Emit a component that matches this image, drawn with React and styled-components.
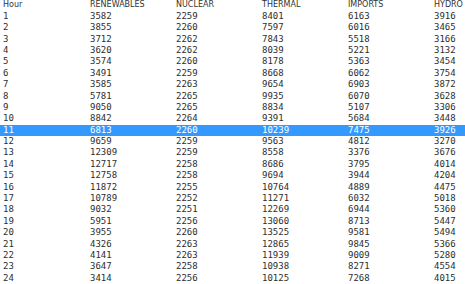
import React from 'react';
import styled, { createGlobalStyle } from 'styled-components';

const GlobalStyle = createGlobalStyle`
  html, body {
    margin: 0;
    padding: 0;
    background: #fff;
    overflow: hidden;
  }
`;

const Table = styled.div`
  width: 465px;
  height: 284px;
  overflow: hidden;
  background: #fff;
`;

const Row = styled.div`
  display: grid;
  grid-template-columns: 87px 86px 86px 86px 86px 86px;
  height: ${p => (p.$head ? '10.6px' : '11.4px')};
  align-items: center;
  padding-left: 3px;
  width: 520px;
  background: ${p => (p.$selected ? '#3399ff' : 'transparent')};
  color: ${p => (p.$selected ? '#fff' : '#2e2e2e')};
`;

const HeadCell = styled.div`
  font-family: "DejaVu Sans", Verdana, sans-serif;
  font-size: 8px;
  line-height: 10px;
  color: #333;
  white-space: nowrap;
`;

const Cell = styled.div`
  font-family: "DejaVu Sans Mono", Consolas, monospace;
  font-size: 9px;
  line-height: 11px;
  white-space: nowrap;
`;

const columns = ['Hour', 'RENEWABLES', 'NUCLEAR', 'THERMAL', 'IMPORTS', 'HYDRO'];

const data = [
  [1, 3582, 2259, 8401, 6163, 3916],
  [2, 3855, 2260, 7597, 6016, 3465],
  [3, 3712, 2262, 7843, 5518, 3166],
  [4, 3620, 2262, 8039, 5221, 3132],
  [5, 3574, 2260, 8178, 5363, 3454],
  [6, 3491, 2259, 8668, 6062, 3754],
  [7, 3585, 2263, 9654, 6903, 3872],
  [8, 5781, 2265, 9935, 6070, 3628],
  [9, 9050, 2265, 8834, 5107, 3306],
  [10, 8842, 2264, 9391, 5684, 3448],
  [11, 6813, 2260, 10239, 7475, 3926],
  [12, 9659, 2259, 9563, 4812, 3270],
  [13, 12309, 2259, 8558, 3376, 3676],
  [14, 12717, 2258, 8686, 3795, 4014],
  [15, 12758, 2258, 9694, 3944, 4204],
  [16, 11872, 2255, 10764, 4889, 4475],
  [17, 10789, 2252, 11271, 6032, 5018],
  [18, 9032, 2251, 12269, 6944, 5360],
  [19, 5951, 2256, 13060, 8713, 5447],
  [20, 3955, 2260, 13525, 9581, 5494],
  [21, 4326, 2263, 12865, 9845, 5366],
  [22, 4141, 2263, 11939, 9009, 5280],
  [23, 3647, 2258, 10938, 8271, 4554],
  [24, 3414, 2256, 10125, 7268, 4015],
];

export default function App() {
  return (
    <Table>
      <GlobalStyle />
      <Row $head>
        {columns.map(c => (
          <HeadCell key={c}>{c}</HeadCell>
        ))}
      </Row>
      {data.map(r => (
        <Row key={r[0]} $selected={r[0] === 11}>
          {r.map((v, i) => (
            <Cell key={i}>{v}</Cell>
          ))}
        </Row>
      ))}
    </Table>
  );
}
